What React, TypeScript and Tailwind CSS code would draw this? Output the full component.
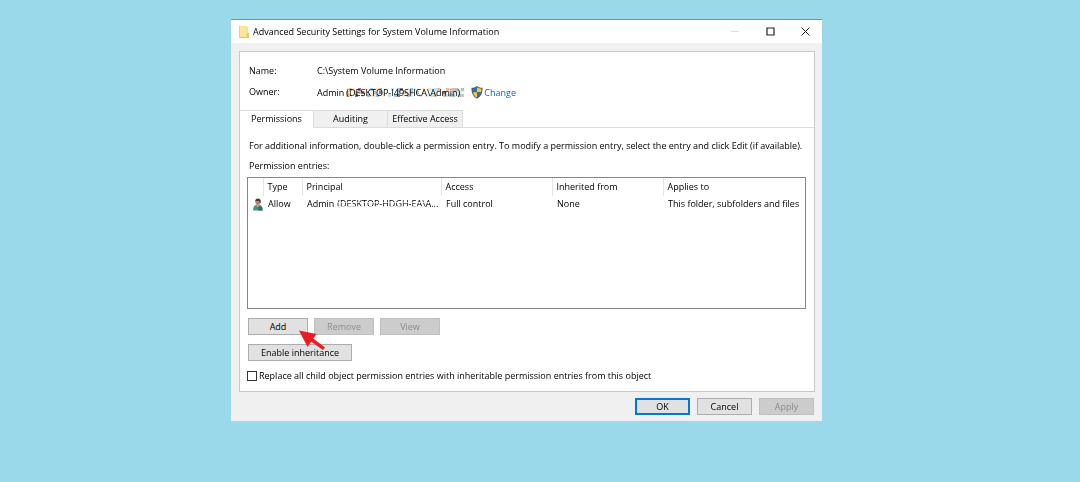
import { useState } from 'react';
import clsx from 'clsx';

// Windows "Advanced Security Settings" dialog on a plain desktop.

interface PermissionEntry {
  type: string;
  principal: string;
  hidden: string;
  access: string;
  inherited: string;
  appliesTo: string;
}

const TABS = [
  { label: 'Permissions', width: 'w-[74px]' },
  { label: 'Auditing', width: 'w-[74px]' },
  { label: 'Effective Access', width: 'w-[75px]' },
];

const ENTRIES: PermissionEntry[] = [
  {
    type: 'Allow',
    principal: 'Admin',
    hidden: '(DESKTOP-HDGH-EA\\A...',
    access: 'Full control',
    inherited: 'None',
    appliesTo: 'This folder, subfolders and files',
  },
];

/** Colours of the mosaic blocks laid over a masked name */
const MOSAIC = ['#fff1d6', '#9cc4dd', '#ffffff', '#d8f0fb', '#e3bd9c', '#ffffff', '#8d7f92', '#ffffff', '#c4e6f7', '#ffffff', '#fbe3cb'];

function FolderIcon() {
  return (
    <svg className="h-[14px] w-[12px]" viewBox="0 0 12 14" aria-hidden>
      <path d="M1 1h8v1h1v10H1z" fill="#ffe08a" />
      <path d="M1 1h1v12H1z" fill="#f3cc66" />
      <path d="M9 8h2v5H2v-1h7z" fill="#edc55c" />
      <path d="M2 2h6v9H2z" fill="#ffe69a" />
    </svg>
  );
}

function ShieldIcon() {
  return (
    <svg className="h-[13px] w-[12px]" viewBox="0 0 12 13" aria-hidden>
      <path d="M6 0C4.500 1.300 2.500 1.800.500 1.800c-.2 5 1.300 8.800 5.500 11 4.200-2.200 5.700-6 5.500-11C9.500 1.800 7.500 1.300 6 0z" fill="#4d5862" />
      <path d="M6 1.300C4.700 2.200 3 2.700 1.500 2.800c0 1.300.1 2.400.4 3.400H6z" fill="#2672c8" />
      <path d="M6 1.300c1.300.9 3 1.400 4.500 1.500 0 1.300-.1 2.400-.4 3.400H6z" fill="#fbc62f" />
      <path d="M1.900 6.200H6v5.500c-2.200-1.300-3.500-3.100-4.100-5.500z" fill="#fbc62f" />
      <path d="M10.100 6.200H6v5.500c2.200-1.300 3.500-3.100 4.100-5.500z" fill="#2672c8" />
    </svg>
  );
}

function UserIcon() {
  return (
    <svg className="mx-auto h-[13px] w-[10px]" viewBox="0 0 10 13" aria-hidden>
      <path d="M.2 12.500C0 9.500.9 7.500 3 7h3.500c2.400.5 3.500 2.500 3.500 5.500z" fill="#4f937c" />
      <path d="M5 8l3-.5 1.500 5H5z" fill="#347660" />
      <path d="M3.500 6h3v2L5 9 3.500 8z" fill="#d3a488" />
      <ellipse cx="4.800" cy="4" rx="2.400" ry="3" fill="#b98770" />
      <path d="M2.300 3.800C2 1.300 3.200.4 5 .4s3.200 1 2.700 4L6.800 6c.2-2-.5-3-1.500-3.200C4 3.200 3 3 2.300 3.800z" fill="#4b3b38" />
    </svg>
  );
}

/** Pixel blocks that hide a machine name: a field of 39 by 3 small squares */
function Mosaic() {
  return (
    <svg className="absolute inset-0 size-full mix-blend-multiply" preserveAspectRatio="none" viewBox="0 0 117 9" shapeRendering="crispEdges" aria-hidden>
      {Array.from({ length: 117 }, (_, i) => (
        <rect
          key={i}
          x={(i % 39) * 3}
          y={Math.floor(i / 39) * 3}
          width="3"
          height="3"
          fill={MOSAIC[(i * i + i * 3 + Math.floor(i / 7)) % MOSAIC.length]}
        />
      ))}
    </svg>
  );
}

/** Light strips that break up the letters of a masked name */
function Strips() {
  return (
    <svg className="absolute inset-0 size-full" preserveAspectRatio="none" viewBox="0 0 100 9" aria-hidden>
      <path d="M0 3h96v1H0zM0 7h88v2H0z" fill="#fff" opacity=".7" />
    </svg>
  );
}

function Arrow() {
  return (
    <svg className="pointer-events-none absolute top-[12px] left-[51px] z-10 h-[20px] w-[26px]" viewBox="0 0 26 20" aria-hidden>
      <path d="M0 0.500L17.500 4l-3.200 4.500L26 17.500 24 20 12.200 11.800 8.500 17z" fill="#ed1c24" />
    </svg>
  );
}

interface DialogButtonProps {
  label: string;
  className: string;
  primary?: boolean;
  disabled?: boolean;
}

function DialogButton({ label, className, primary, disabled }: DialogButtonProps) {
  return (
    <button
      type="button"
      disabled={disabled}
      className={clsx(
        'flex h-[17px] items-center justify-center',
        primary ? 'border-2 border-[#0078d7]' : 'border',
        disabled ? 'border-[#bfbfbf] bg-[#cccccc] text-[#8b8b8b]' : 'bg-[#e1e1e1]',
        !primary && !disabled && 'border-[#adadad]',
        className,
      )}
    >
      {label}
    </button>
  );
}

export default function App() {
  const [tab, setTab] = useState(0);
  const [replace, setReplace] = useState(false);

  return (
    <div className="min-h-screen bg-[#9ad9ea] pt-[19px] pr-[258px] pb-8 pl-[231px] font-['Open_Sans',sans-serif] text-[9px] leading-3 text-black">
      <main className="border-t border-[#4a9fd6] bg-[#f0f0f0]">
        <header className="flex h-[23px] items-center bg-white pr-3 pl-[7px]">
          <FolderIcon />
          <h1 className="ml-[3px] flex-1 whitespace-nowrap">Advanced Security Settings for System Volume Information</h1>
          <div className="flex gap-[26px]">
            <button type="button" aria-label="Minimize" disabled>
              <svg className="h-[9px] w-[9px]" viewBox="0 0 9 9"><path d="M0 4.500h8" stroke="#dcdcdc" /></svg>
            </button>
            <button type="button" aria-label="Maximize">
              <svg className="h-[9px] w-[9px]" viewBox="0 0 9 9"><path d="M1 1h7v7H1z" fill="none" stroke="#222" strokeWidth="1.200" /></svg>
            </button>
            <button type="button" aria-label="Close">
              <svg className="h-[9px] w-[9px]" viewBox="0 0 9 9"><path d="M.5.5l8 8M8.500.5l-8 8" stroke="#222" /></svg>
            </button>
          </div>
        </header>

        <section className="mt-2 mr-[7px] ml-2 border border-[#c8c8c8] bg-white">
          <dl className="grid grid-cols-[68px_1fr] gap-y-[9px] pt-[13px] pb-[11px] pl-[9px]">
            <dt>Name:</dt>
            <dd>C:\System Volume Information</dd>
            <dt>Owner:</dt>
            <dd className="flex items-center whitespace-nowrap">
              Admin
              <span className="relative ml-[2px] flex h-[9px] w-[118px] items-center font-medium">
                (DESKTOP-I49SHCA\Admin)
                <Mosaic />
              </span>
              <span className="ml-[7px]"><ShieldIcon /></span>
              <a href="#change" className="ml-px text-[#0066cc]">Change</a>
            </dd>
          </dl>

          <div role="tablist" className="flex h-[18px] items-stretch">
            {TABS.map((t, i) => (
              <button
                key={t.label}
                type="button"
                role="tab"
                aria-selected={i === tab}
                onClick={() => setTab(i)}
                className={clsx(
                  'border-y border-r border-[#dcdcdc] whitespace-nowrap',
                  t.width,
                  i === tab ? 'border-b-white bg-white' : 'bg-[#f0f0f0]',
                )}
              >
                {t.label}
              </button>
            ))}
            <span className="flex-1 border-b border-[#dcdcdc]" />
          </div>

          <div className="px-2 pt-3 pb-[9px]">
            <p className="pl-px whitespace-nowrap">
              For additional information, double-click a permission entry. To modify a permission entry, select the entry and click Edit (if available).
            </p>
            <p className="mt-2 pl-px">Permission entries:</p>

            <div className="-ml-px mt-[5px] h-[132px] border border-[#828790]">
              <table className="w-full table-fixed border-collapse text-left whitespace-nowrap">
                <colgroup>
                  <col className="w-[15px]" />
                  <col className="w-[39px]" />
                  <col className="w-[139px]" />
                  <col className="w-[111px]" />
                  <col className="w-[111px]" />
                  <col />
                </colgroup>
                <thead>
                  <tr className="h-[18px]">
                    <th className="border-r border-[#e5e5e5]" aria-label="Icon" />
                    {['Type', 'Principal', 'Access', 'Inherited from', 'Applies to'].map((h) => (
                      <th key={h} className="border-r border-[#e5e5e5] p-0 pl-1 font-normal last:border-r-0">{h}</th>
                    ))}
                  </tr>
                </thead>
                <tbody>
                  {ENTRIES.map((e) => (
                    <tr key={e.type} className="h-4">
                      <td className="p-0 pl-1"><UserIcon /></td>
                      <td className="p-0 pl-[5px]">{e.type}</td>
                      <td className="p-0 pl-[5px]">
                        <div className="flex items-center">
                          {e.principal}
                          <span className="relative mb-px ml-[3px] flex h-[9px] w-[100px] items-center font-medium">
                            {e.hidden}
                            <Strips />
                          </span>
                        </div>
                      </td>
                      <td className="p-0 pl-[5px]">{e.access}</td>
                      <td className="p-0 pl-[5px]">{e.inherited}</td>
                      <td className="p-0 pl-[5px]">{e.appliesTo}</td>
                    </tr>
                  ))}
                </tbody>
              </table>
            </div>

            <div className="mt-[9px] flex gap-[6px]">
              <div className="relative">
                <DialogButton label="Add" className="w-[60px]" />
                <Arrow />
              </div>
              <DialogButton label="Remove" className="w-[60px]" disabled />
              <DialogButton label="View" className="w-[60px]" disabled />
            </div>
            <div className="mt-[9px]">
              <DialogButton label="Enable inheritance" className="w-[104px]" />
            </div>
            <label className="-ml-px mt-[9px] flex items-center gap-[2px] whitespace-nowrap">
              <input
                type="checkbox"
                checked={replace}
                onChange={(e) => setReplace(e.target.checked)}
                className="size-[10px] appearance-none border border-[#333] bg-white checked:bg-[#0078d7]"
              />
              Replace all child object permission entries with inheritable permission entries from this object
            </label>
          </div>
        </section>

        <footer className="flex justify-end gap-[7px] px-2 pt-[6px] pb-[6px]">
          <DialogButton label="OK" className="w-[55px]" primary />
          <DialogButton label="Cancel" className="w-[55px]" />
          <DialogButton label="Apply" className="w-[55px]" disabled />
        </footer>
      </main>
    </div>
  );
}
